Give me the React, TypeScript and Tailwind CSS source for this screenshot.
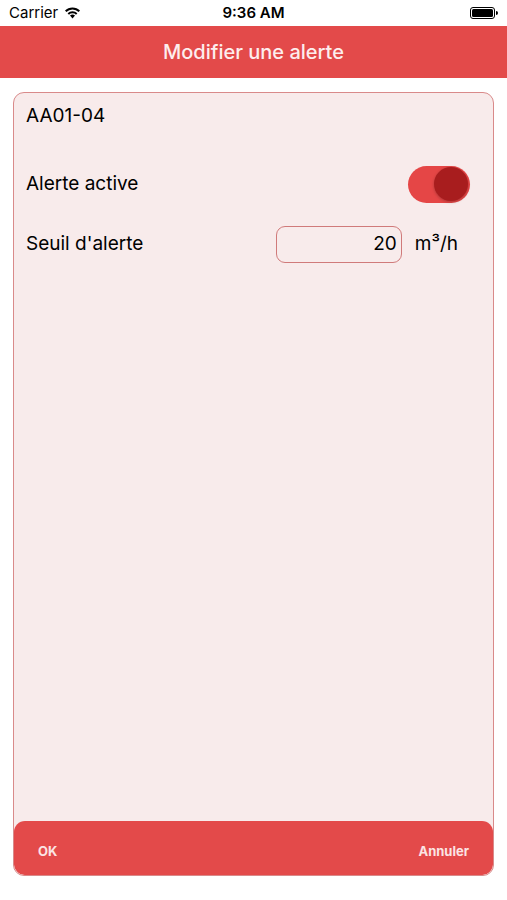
export default function App() {
  return (
    <div className="w-[507px] h-[900px] bg-white flex flex-col" style={{ fontFamily: '"Inter", "Liberation Sans", sans-serif' }}>
      {/* Status bar */}
      <div className="h-[26px] flex items-center px-[9px] relative text-[15px] text-black">
        <div className="flex items-center gap-[6px]">
          <span>Carrier</span>
          <svg width="17" height="12" viewBox="0 0 17 12">
            <path d="M8.5 11.5 L6 8.6 A3.6 3.6 0 0 1 11 8.6 Z" fill="black" />
            <path d="M3.6 6.3 A7 7 0 0 1 13.4 6.3 L12 7.7 A5 5 0 0 0 5 7.7 Z" fill="black" />
            <path d="M1 3.6 A10.6 10.6 0 0 1 16 3.6 L14.6 5 A8.6 8.6 0 0 0 2.4 5 Z" fill="black" />
          </svg>
        </div>
        <div className="absolute left-0 right-0 text-center font-semibold pointer-events-none">9:36 AM</div>
        <div className="ml-auto flex items-center">
          <div className="w-[25px] h-[12px] rounded-[3px] border border-black p-[1px]">
            <div className="w-full h-full bg-black rounded-[1.5px]" />
          </div>
          <div className="w-[2px] h-[4px] bg-black rounded-r-sm ml-[1px]" />
        </div>
      </div>
      {/* Header */}
      <div className="h-[52px] bg-[#e34a4a] flex items-center justify-center text-[20px] font-medium text-[#fdeeee]">
        Modifier une alerte
      </div>
      {/* Card */}
      <div className="flex-1 px-[13px] pt-[14px] pb-[24px] flex">
        <div className="flex-1 flex flex-col rounded-[11px] border border-[#d98a8a] bg-[#f8ebeb] overflow-hidden">
          <div className="flex-1 flex flex-col px-[12px]">
            <div className="text-[19px] text-black pt-[11px] leading-[24px]">AA01-04</div>
            <div className="flex items-center justify-between mt-[37px] h-[38px]">
              <span className="text-[19px] text-black">Alerte active</span>
              <div className="w-[62px] h-[37px] rounded-full bg-[#e54646] flex items-center justify-end pr-[2px] mr-[11px]">
                <div className="w-[34px] h-[34px] rounded-full bg-[#a81d1e] shadow-[0_1px_3px_rgba(0,0,0,0.25)]" />
              </div>
            </div>
            <div className="flex items-center mt-[23px] h-[37px]">
              <span className="text-[19px] text-black">Seuil d'alerte</span>
              <div className="ml-auto w-[126px] h-[37px] rounded-[9px] border border-[#d07a7a] flex items-center justify-end pr-[4px] text-[19px] text-black">
                20
              </div>
              <span className="ml-[13px] mr-[23px] text-[19px] text-black">m³/h</span>
            </div>
          </div>
          <div className="h-[54px] bg-[#e34a4a] rounded-[11px] flex items-center justify-between px-[24px] pt-[7px] text-[13px] font-bold text-[#fbe4e4]">
            <span>OK</span>
            <span>Annuler</span>
          </div>
        </div>
      </div>
    </div>
  );
}
